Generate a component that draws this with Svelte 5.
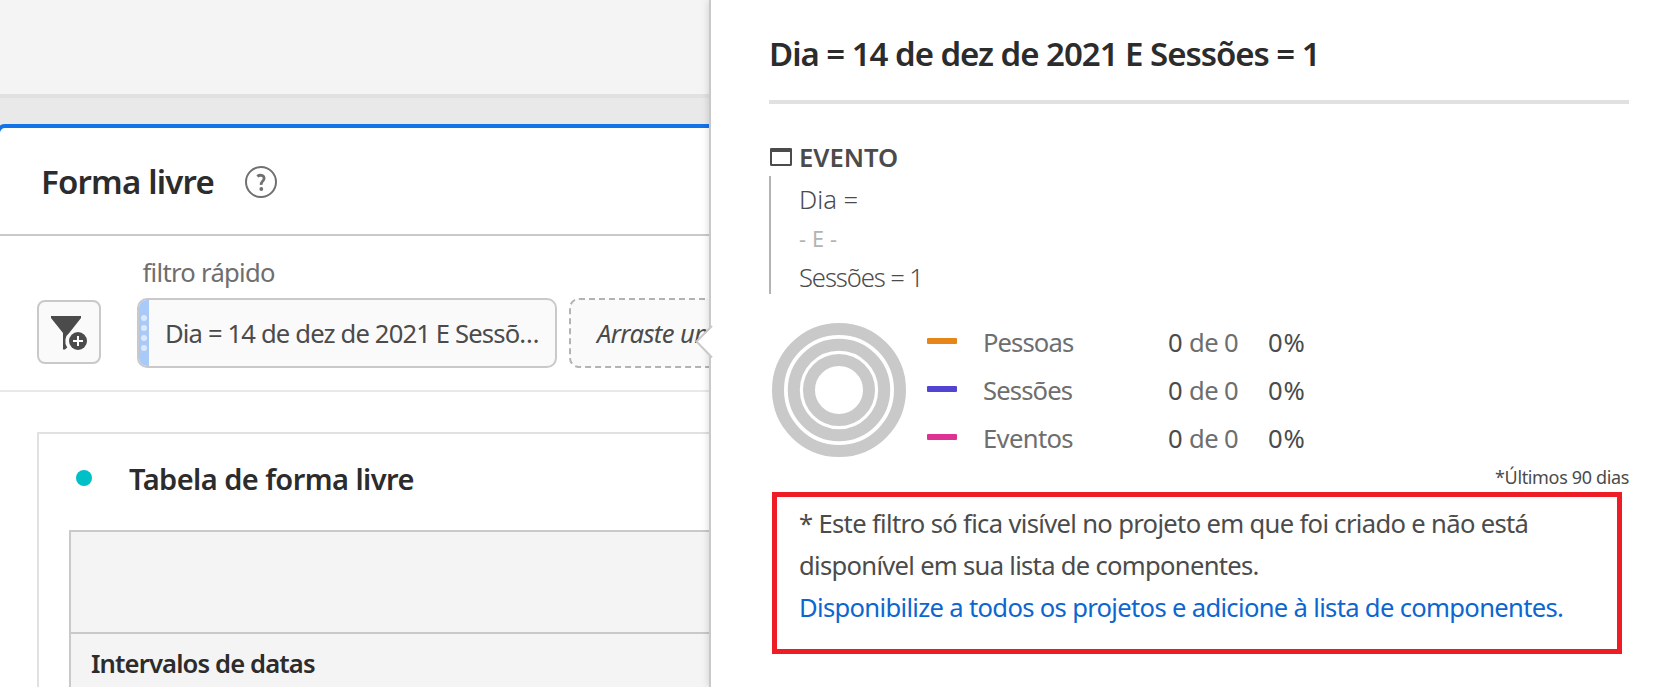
<script>
  const metrics = [
    { name: 'Pessoas', color: '#e68619', spacing: -0.9 },
    { name: 'Sessões', color: '#5144d3', spacing: -0.85 },
    { name: 'Eventos', color: '#de3292', spacing: -0.65 },
  ];
  const dots = [0, 1, 2, 3];
</script>

<div class="page">
  <main class="workspace">
    <div class="topbar"></div>
    <section class="panel">
      <header class="panel-head">
        <h2>Forma livre</h2>
        <svg class="help" width="32" height="32" viewBox="0 0 32 32">
          <circle cx="16" cy="16" r="15" fill="none" stroke="#707070" stroke-width="2" />
          <path d="M12.3 10.4C14.6 8.5 19.1 8.9 19.1 12.2C19.1 15.1 15.8 15.4 16.2 18.8" fill="none" stroke="#707070" stroke-width="2.8" />
          <circle cx="16.3" cy="23" r="1.9" fill="#707070" />
        </svg>
      </header>

      <div class="filters">
        <button class="add" aria-label="filtro">
          <svg width="60" height="60" viewBox="0 0 60 60">
            <path d="M12 14H42V16L30.6 30.6A11 11 0 0 0 28.2 45.6L26 47.4H24V31L12 16Z" fill="#4b4b4b" />
            <circle cx="39" cy="39" r="9" fill="#4b4b4b" />
            <path d="M39 34V44M34 39H44" stroke="#fff" stroke-width="2" />
          </svg>
        </button>
        <div class="dropzone">
          <div class="label">filtro rápido</div>
          <div class="chips">
            <div class="chip">
              <span class="handle">{#each dots as d (d)}<i></i>{/each}</span>
              <span class="chip-text">Dia = 14 de dez de 2021 E Sessõ…</span>
            </div>
            <div class="drop">
              <svg width="260" height="70" viewBox="0 0 260 70">
                <rect x="1" y="1" width="280" height="68" rx="9" fill="#fafafa" stroke="#b3b3b3" stroke-width="2" stroke-dasharray="6 4" />
              </svg>
              <span>Arraste um</span>
            </div>
          </div>
        </div>
      </div>

      <div class="card">
        <div class="card-head">
          <span class="bullet"></span>
          <h3>Tabela de forma livre</h3>
        </div>
        <div class="table">
          <div class="blank"></div>
          <div class="row">Intervalos de datas</div>
        </div>
      </div>
    </section>
  </main>

  <aside class="popover">
    <svg class="arrow" width="18" height="36" viewBox="0 0 18 36">
      <path d="M18 1.6L2 17.8L18 34Z" fill="#fff" />
      <path d="M17 2L1.5 17.5L17 33.5" fill="none" stroke="#c9c9c9" stroke-width="2" />
    </svg>
    <h1>Dia = 14 de dez de 2021 E Sessões = 1</h1>

    <div class="scope">
      <svg width="23" height="18" viewBox="0 0 23 18">
        <rect x="2" y="1" width="20" height="16" rx="0.5" fill="none" stroke="#4b4b4b" stroke-width="2" />
        <path d="M1 0.5H23V4H1Z" fill="#4b4b4b" />
      </svg>
      <span>EVENTO</span>
    </div>
    <div class="rules">
      <div class="rule dia">Dia =</div>
      <div class="and">- E -</div>
      <div class="rule ses">Sessões = 1</div>
    </div>

    <div class="stats">
      <svg class="donut" width="134" height="134" viewBox="0 0 134 134" fill="none" stroke="#c9c9c9" stroke-width="12">
        <circle cx="67" cy="67" r="61" />
        <circle cx="67" cy="67" r="45.2" />
        <circle cx="67" cy="67" r="30" />
      </svg>
      <div class="legend">
        {#each metrics as m (m.name)}
          <div class="metric">
            <span class="dash" style="background:{m.color}"></span>
            <span class="name" style="letter-spacing:{m.spacing}px">{m.name}</span>
            <span class="num">0</span>
            <span class="of">de 0</span>
            <span class="pct">0%</span>
          </div>
        {/each}
      </div>
    </div>
    <div class="foot">*Últimos 90 dias</div>

    <div class="notice">
      <p class="l1">* Este filtro só fica visível no projeto em que foi criado e não está</p>
      <p class="l2">disponível em sua lista de componentes.</p>
      <p class="link">Disponibilize a todos os projetos e adicione à lista de componentes.</p>
    </div>
  </aside>
</div>

<style>
  :global(body) { margin: 0; overflow: hidden; }
  .page {
    display: flex;
    width: 1671px;
    height: 687px;
    overflow: hidden;
    font: 400 25.6px 'Noto Sans', sans-serif;
    color: #4b4b4b;
    white-space: nowrap;
    background: #fff;
  }
  .page * { box-sizing: border-box; }
  h1, h2, h3, p { margin: 0; }

  .workspace { width: 709px; flex: none; height: 687px; overflow: hidden; background: #e9e9e9; }
  .topbar { height: 98px; background: #f4f4f4; border-bottom: 4px solid #e1e1e1; }
  .panel {
    margin: 26px -20px 0 -4px;
    height: 600px;
    border: 4px solid #1473e6;
    border-radius: 9px;
    background: #fff;
  }
  .panel-head {
    display: flex;
    align-items: center;
    height: 108px;
    padding: 1px 0 0 41px;
    border-bottom: 2px solid #c9c9c9;
  }
  .panel-head h2 {
    width: 204px;
    padding-top: 1px;
    font-size: 33px;
    font-weight: 600;
    line-height: 44px;
    letter-spacing: -0.8px;
    color: #2c2c2c;
  }
  .filters {
    display: flex;
    gap: 36px;
    height: 156px;
    padding: 21px 0 0 37px;
    border-bottom: 2px solid #e9e9e9;
  }
  .add {
    flex: none;
    width: 64px;
    height: 64px;
    margin-top: 43px;
    padding: 0;
    border: 2px solid #c9c9c9;
    border-radius: 8px;
    background: #fafafa;
  }
  .add svg { display: block; }
  .label { height: 41px; padding-left: 5.5px; line-height: 32px; letter-spacing: -0.7px; color: #6e6e6e; }
  .chips { display: flex; gap: 12px; }
  .chip {
    flex: none;
    display: flex;
    align-items: center;
    width: 420px;
    height: 70px;
    border: 2px solid #c9c9c9;
    border-radius: 10px;
    background: #fafafa;
    overflow: hidden;
  }
  .handle {
    display: flex;
    flex-direction: column;
    align-items: center;
    justify-content: center;
    gap: 4px;
    width: 10px;
    height: 66px;
    background: #a9c9f9;
  }
  .handle i { width: 6px; height: 6px; border-radius: 3px; background: #dce9fd; }
  .chip-text { margin-left: 16px; letter-spacing: -0.84px; }
  .drop { display: grid; align-items: center; height: 70px; }
  .drop > * { grid-area: 1 / 1; }
  .drop span { padding-left: 28px; font-style: italic; letter-spacing: -0.6px; }

  .card { height: 300px; margin: 40px 0 0 37px; border: 2px solid #e1e1e1; }
  .card-head { display: flex; height: 96px; padding: 29px 0 0 37px; }
  .bullet { width: 16px; height: 16px; margin: 7px 37px 0 0; border-radius: 8px; background: #00c0c7; }
  h3 { font-size: 29px; font-weight: 600; line-height: 31px; letter-spacing: -0.55px; color: #2c2c2c; }
  .table { height: 200px; margin-left: 30px; border: 2px solid #c9c9c9; background: #f4f4f4; }
  .blank { height: 102px; border-bottom: 2px solid #c9c9c9; }
  .row { padding: 14px 0 0 20px; font-weight: 600; line-height: 31px; letter-spacing: -0.87px; color: #2c2c2c; }

  .popover {
    position: relative;
    flex: 1;
    padding: 0 42px 0 58px;
    border-left: 2px solid #c9c9c9;
    background: #fff;
    box-shadow: 0 0 8px rgba(0, 0, 0, 0.16);
  }
  .arrow { position: absolute; left: -16px; top: 324px; }
  h1 {
    height: 104px;
    padding-top: 32px;
    border-bottom: 4px solid #e1e1e1;
    font-size: 33px;
    font-weight: 600;
    line-height: 44px;
    letter-spacing: -1.02px;
    color: #2c2c2c;
  }
  .scope { display: flex; align-items: center; gap: 7px; margin-top: 36px; height: 34px; font-weight: 600; line-height: 34px; }
  .scope span { padding-top: 1px; }
  .rules { height: 118px; margin-top: 2px; padding: 4px 0 0 28px; border-left: 2px solid #b3b3b3; }
  .rule { line-height: 40px; font-weight: 300; }
  .dia { letter-spacing: 0; }
  .ses { letter-spacing: -1.1px; }
  .and { font-size: 21.7px; line-height: 38px; letter-spacing: 0.2px; color: #b3b3b3; }
  .stats { display: flex; height: 144px; margin-top: 24px; }
  .donut { flex: none; margin: 5px 21px 0 3px; }
  .metric { display: flex; align-items: center; height: 48px; line-height: 48px; }
  .metric span:not(.dash) { padding-top: 2px; }
  .dash { width: 30px; height: 6px; margin: 0 26px 2px 0; border-radius: 1px; }
  .name { width: 185px; color: #6e6e6e; }
  .num { width: 21px; }
  .of { width: 79px; letter-spacing: -0.6px; color: #6e6e6e; }
  .pct { letter-spacing: 0.8px; }
  .foot { height: 30px; font-size: 18px; line-height: 31px; letter-spacing: -0.35px; text-align: right; }
  .notice {
    width: 850px;
    height: 162px;
    margin-left: 3px;
    padding: 5.5px 0 0 22px;
    border: 5px solid #ee1c24;
    line-height: 42px;
  }
  .l1 { letter-spacing: -0.67px; }
  .l2 { letter-spacing: -0.71px; }
  .link { letter-spacing: -0.68px; color: #0d66d0; }
</style>
